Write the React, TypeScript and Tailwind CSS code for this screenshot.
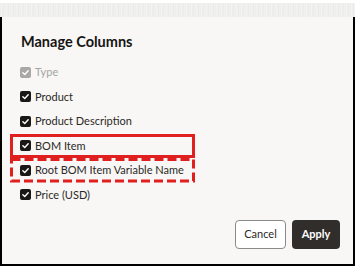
import React from 'react';

type Column = { label: string; disabled?: boolean; mark?: 'solid' | 'dashed' };

const COLUMNS: Column[] = [
  { label: 'Type', disabled: true },
  { label: 'Product' },
  { label: 'Product Description' },
  { label: 'BOM Item', mark: 'solid' },
  { label: 'Root BOM Item Variable Name', mark: 'dashed' },
  { label: 'Price (USD)' },
];

const Check = ({ disabled }: { disabled?: boolean }) => (
  <span
    className={`flex h-[11px] w-[11px] shrink-0 items-center justify-center rounded-[2px] ${
      disabled ? 'bg-[#a9a8a6]' : 'bg-[#1a1816]'
    }`}
  >
    <svg viewBox="0 0 12 12" className="h-[9px] w-[9px]" fill="none">
      <path d="M2.5 6.2 L5 8.6 L9.6 3.6" stroke="white" strokeWidth="1.9" strokeLinecap="round" strokeLinejoin="round" />
    </svg>
  </span>
);

// dashed highlight drawn over the row, longer dashes than css border gives
const DashedFrame = () => (
  <svg className="pointer-events-none absolute inset-0 h-full w-full" preserveAspectRatio="none">
    <rect x="1.5" y="1.5" width="182" height="21.5" fill="none" stroke="#e01f1f" strokeWidth="3" strokeDasharray="9 4" />
  </svg>
);

const App = () => {
  return (
    <div className="h-[268px] w-[355px] bg-white font-['Lato',sans-serif]">
      {/* ragged screenshot edge */}
      <div className="h-[3px] bg-white" />
      <div className="h-[14px] bg-[repeating-linear-gradient(90deg,#ebeaea_0px,#f4f4f3_2px,#e6e6e5_3px,#f2f2f1_5px)] opacity-90" />
      <div className="flex h-[249px] flex-col border-x-2 border-b-2 border-black bg-[#f8f7f5] pl-[19px] pr-[13px]">
        <h1 className="mt-[15px] text-[14.5px] font-bold leading-5 text-[#161513]">Manage Columns</h1>
        <div className="mt-[8px] flex flex-col">
          {COLUMNS.map((c) => (
            <div
              key={c.label}
              className={`relative -ml-[11px] flex h-[24.5px] w-[185px] items-center gap-[4px] whitespace-nowrap ${
                c.mark === 'solid' ? 'border-[3px] border-[#e01f1f] pl-[7px]' : 'pl-[10px]'
              }`}
            >
              <Check disabled={c.disabled} />
              <span className={`text-[11px] ${c.disabled ? 'text-[#a5a4a2]' : 'text-[#2b2927]'}`}>{c.label}</span>
              {c.mark === 'dashed' && <DashedFrame />}
            </div>
          ))}
        </div>
        <div className="mt-auto mb-[15px] flex justify-end gap-[6px]">
          <button className="h-[29px] w-[51px] rounded-[4px] border border-[#8c8a88] bg-white text-[11px] text-[#2b2927]">
            Cancel
          </button>
          <button className="h-[29px] w-[48px] rounded-[4px] bg-[#312d2a] text-[11px] font-bold text-white">
            Apply
          </button>
        </div>
      </div>
    </div>
  );
};

export default App;
